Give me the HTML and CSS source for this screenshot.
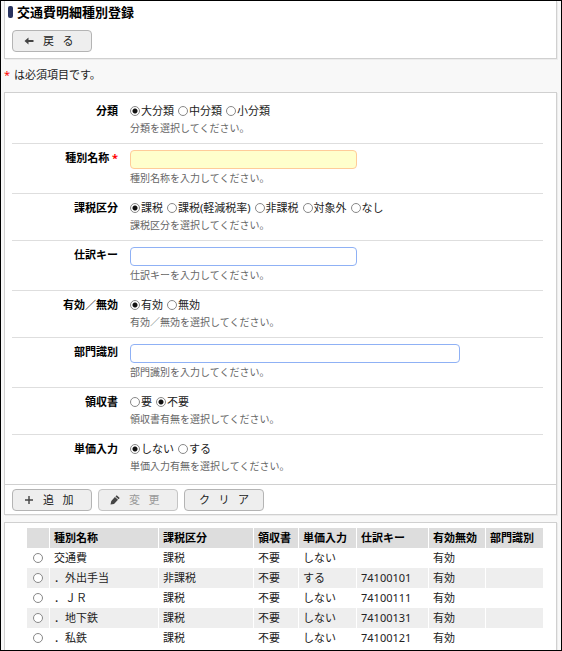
FILE: index.html
```html
<!DOCTYPE html>
<html lang="ja">
<head>
    <meta charset="UTF-8">
    <meta name="viewport" content="width=device-width, initial-scale=1.0">
    <title>交通費明細種別登録</title>
    <link rel="stylesheet" href="styles.css">
</head>
<body>
    <header class="panel head">
        <h1>交通費明細種別登録</h1>
        <button class="btn" type="button">
            <svg class="icon" viewBox="0 0 10 10" aria-hidden="true"><path d="M0.5 5 L4.5 1.5 V4 H9.5 V6 H4.5 V8.5 Z" fill="#444"/></svg>
            戻&nbsp;&nbsp;&nbsp;る
        </button>
    </header>

    <p class="note"><span class="must">*</span> は必須項目です。</p>

    <form class="panel entry">
        <div class="rows">
            <div class="row" role="radiogroup" aria-labelledby="l-bunrui">
                <span class="caption" id="l-bunrui">分類</span>
                <div class="field">
                    <div class="options">
                        <label><input type="radio" name="bunrui" checked>大分類</label>
                        <label><input type="radio" name="bunrui">中分類</label>
                        <label><input type="radio" name="bunrui">小分類</label>
                    </div>
                    <p class="hint">分類を選択してください。</p>
                </div>
            </div>
            <div class="row">
                <label class="caption" for="meisho">種別名称 <span class="must">*</span></label>
                <div class="field">
                    <input class="text required" type="text" id="meisho">
                    <p class="hint">種別名称を入力してください。</p>
                </div>
            </div>
            <div class="row" role="radiogroup" aria-labelledby="l-kazei">
                <span class="caption" id="l-kazei">課税区分</span>
                <div class="field">
                    <div class="options">
                        <label><input type="radio" name="kazei" checked>課税</label>
                        <label><input type="radio" name="kazei">課税(軽減税率)</label>
                        <label><input type="radio" name="kazei">非課税</label>
                        <label><input type="radio" name="kazei">対象外</label>
                        <label><input type="radio" name="kazei">なし</label>
                    </div>
                    <p class="hint">課税区分を選択してください。</p>
                </div>
            </div>
            <div class="row">
                <label class="caption" for="shiwake">仕訳キー</label>
                <div class="field">
                    <input class="text" type="text" id="shiwake">
                    <p class="hint">仕訳キーを入力してください。</p>
                </div>
            </div>
            <div class="row" role="radiogroup" aria-labelledby="l-yuko">
                <span class="caption" id="l-yuko">有効／無効</span>
                <div class="field">
                    <div class="options">
                        <label><input type="radio" name="yuko" checked>有効</label>
                        <label><input type="radio" name="yuko">無効</label>
                    </div>
                    <p class="hint">有効／無効を選択してください。</p>
                </div>
            </div>
            <div class="row">
                <label class="caption" for="bumon">部門識別</label>
                <div class="field">
                    <input class="text wide" type="text" id="bumon">
                    <p class="hint">部門識別を入力してください。</p>
                </div>
            </div>
            <div class="row" role="radiogroup" aria-labelledby="l-ryoshu">
                <span class="caption" id="l-ryoshu">領収書</span>
                <div class="field">
                    <div class="options">
                        <label><input type="radio" name="ryoshu">要</label>
                        <label><input type="radio" name="ryoshu" checked>不要</label>
                    </div>
                    <p class="hint">領収書有無を選択してください。</p>
                </div>
            </div>
            <div class="row" role="radiogroup" aria-labelledby="l-tanka">
                <span class="caption" id="l-tanka">単価入力</span>
                <div class="field">
                    <div class="options">
                        <label><input type="radio" name="tanka" checked>しない</label>
                        <label><input type="radio" name="tanka">する</label>
                    </div>
                    <p class="hint">単価入力有無を選択してください。</p>
                </div>
            </div>
        </div>
        <div class="actions">
            <button class="btn" type="button">
                <svg class="icon" viewBox="0 0 10 10" aria-hidden="true"><path d="M5 1 V9 M1 5 H9" stroke="#444" stroke-width="1.4" fill="none"/></svg>
                追&nbsp;&nbsp;&nbsp;加
            </button>
            <button class="btn" type="button" disabled>
                <svg class="icon" viewBox="0 0 10 10" aria-hidden="true"><path d="M0.5 9.5 L1.3 6 L4.9 2 L8 4.8 L4 8.9 Z M5.5 1.4 L6.7 0.3 L9.7 3.1 L8.6 4.2 Z" fill="#444"/></svg>
                変&nbsp;&nbsp;&nbsp;更
            </button>
            <button class="btn plain" type="reset">ク&nbsp;&nbsp;&nbsp;リ&nbsp;&nbsp;&nbsp;ア</button>
        </div>
    </form>

    <section class="panel list">
        <table>
            <colgroup>
                <col class="c-pick"><col class="c-name"><col class="c-tax"><col class="c-receipt"><col class="c-price"><col class="c-key"><col class="c-valid"><col>
            </colgroup>
            <thead>
                <tr><th></th><th>種別名称</th><th>課税区分</th><th>領収書</th><th>単価入力</th><th>仕訳キー</th><th>有効無効</th><th>部門識別</th></tr>
            </thead>
            <tbody>
                <tr><td><input type="radio" name="pick" aria-label="交通費"></td><td>交通費</td><td>課税</td><td>不要</td><td>しない</td><td></td><td>有効</td><td></td></tr>
                <tr><td><input type="radio" name="pick" aria-label="外出手当"></td><td>．外出手当</td><td>非課税</td><td>不要</td><td>する</td><td>74100101</td><td>有効</td><td></td></tr>
                <tr><td><input type="radio" name="pick" aria-label="ＪＲ"></td><td>．ＪＲ</td><td>課税</td><td>不要</td><td>しない</td><td>74100111</td><td>有効</td><td></td></tr>
                <tr><td><input type="radio" name="pick" aria-label="地下鉄"></td><td>．地下鉄</td><td>課税</td><td>不要</td><td>しない</td><td>74100131</td><td>有効</td><td></td></tr>
                <tr><td><input type="radio" name="pick" aria-label="私鉄"></td><td>．私鉄</td><td>課税</td><td>不要</td><td>しない</td><td>74100121</td><td>有効</td><td></td></tr>
            </tbody>
        </table>
    </section>
</body>
</html>
```

FILE: styles.css
```css
* { box-sizing: border-box; }
body {
    display: flex;
    flex-direction: column;
    min-height: 100vh;
    margin: 0;
    padding: 0 4px 0 3px;
    border: 1px solid #000;
    background: #f8f8f8;
    color: #222;
    font-family: "Noto Sans", "Noto Sans CJK JP", sans-serif;
    font-size: 11px;
    line-height: 16px;
}
p, h1 { margin: 0; }
.panel {
    background: #fff;
    border: 1px solid #d0d0d0;
    box-shadow: 1px 1px 0 #ececec;
}

/* header */
.head { padding: 2px 7px 6px; border-top: 0; }
h1 {
    display: flex;
    align-items: center;
    gap: 4px;
    margin: 0 0 9px -4px;
    font-size: 13px;
    line-height: 18px;
    color: #000;
}
h1::before {
    content: "";
    width: 5px;
    height: 12px;
    border-radius: 2px;
    background: #28335f;
}
.note { padding-bottom: 2px; line-height: 31px; }
.must { color: #f00; margin-right: 1px; }

/* buttons */
.btn {
    display: flex;
    align-items: center;
    gap: 9px;
    width: 80px;
    height: 22px;
    padding: 0 0 0 11px;
    border: 1px solid #b4b4b4;
    border-radius: 4px;
    background: #eee;
    color: #222;
    font: inherit;
}
.btn:disabled { color: #999; border-color: #c4c4c4; }
.btn.plain { justify-content: center; padding: 0; }
.icon { width: 10px; height: 10px; }

/* form */
.rows { padding: 4px 13px 3px 7px; }
.row {
    display: grid;
    grid-template-columns: 106px 1fr;
    gap: 12px;
    padding: 6px 0 7px;
    border-bottom: 1px solid #dedede;
}
.row:last-child { border-bottom: 0; }
.caption { text-align: right; font-weight: bold; color: #000; }
.caption .must { margin: 0; }
.options { display: flex; gap: 4px; }
.options label { display: flex; align-items: center; gap: 1px; }
input[type="radio"] {
    appearance: none;
    width: 10px;
    height: 10px;
    margin: 0;
    border: 1px solid #888;
    border-radius: 50%;
    background: #fff;
}
input[type="radio"]:checked { background: radial-gradient(circle, #111 0 2px, #fff 3px); }
.text {
    display: block;
    width: 55%;
    height: 19px;
    padding: 0 4px;
    border: 1px solid #8fb1f5;
    border-radius: 4px;
    background: #fff;
    font: inherit;
}
.text.wide { width: 80%; }
.text.required { background: #ffc; border-color: #fc9; }
.hint { margin-top: 2px; font-size: 10px; line-height: 15px; color: #666; }
.actions {
    display: flex;
    gap: 6px;
    padding: 4px 7px 3px;
    border-top: 1px solid #d0d0d0;
}

/* list */
.list { flex: 1; margin-top: 7px; padding: 5px 13px 0 22px; border-bottom: 0; }
table { width: 100%; table-layout: fixed; border-collapse: separate; border-spacing: 0; }
th, td {
    height: 20px;
    padding: 0 0 0 4px;
    border-right: 1px solid #fff;
    text-align: left;
    white-space: nowrap;
}
th { background: #ddd; color: #000; }
th:last-child, td:last-child { border-right: 0; }
tbody tr:nth-child(even) td { background: #eee; }
td:first-child { padding: 0; text-align: center; }
td input[type="radio"] { display: block; margin: 0 auto; }
.c-pick { width: 23px; }
.c-name { width: 109px; }
.c-tax { width: 95px; }
.c-receipt { width: 45px; }
.c-price { width: 58px; }
.c-key { width: 72px; }
.c-valid { width: 57px; }
```
